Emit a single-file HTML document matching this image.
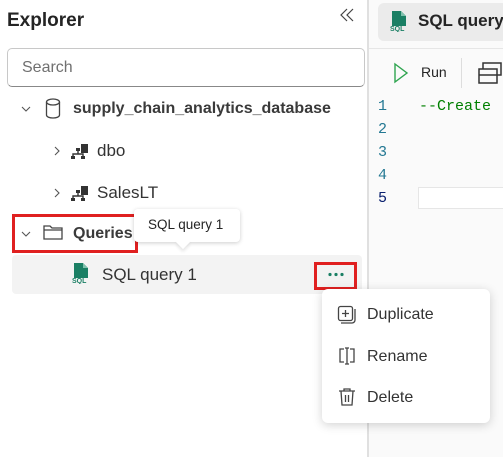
<!DOCTYPE html>
<html><head><style>
*{margin:0;padding:0;box-sizing:border-box}
body{width:503px;height:457px;overflow:hidden;background:#fff;font-family:"Liberation Sans",sans-serif;color:#242424;position:relative}
.a{position:absolute;white-space:nowrap}
</style></head><body>
<div class="a" style="left:367px;top:0;width:2px;height:457px;background:#e0e0e0"></div>
<div class="a" style="left:369px;top:0;width:134px;height:457px;background:#fafafa"></div>
<div class="a" style="left:369px;top:48px;width:134px;height:1px;background:#e6e6e6"></div>
<div class="a" style="left:378px;top:3px;width:130px;height:38px;background:#ebebeb;border-radius:6px"></div>
<svg class="a" style="left:390px;top:10px" width="18" height="22" viewBox="0 0 18 22"><path d="M2 1h9l5 5v10H2z" fill="#1a7f64"/><path d="M11 1v5h5" fill="#7fc1ad"/><text x="0" y="21" font-size="7" font-weight="bold" fill="#1a7f64" font-family="Liberation Sans">SQL</text></svg>
<div class="a" style="left:418px;top:11px;font-size:17px;font-weight:bold;color:#242424">SQL query 1</div>
<svg class="a" style="left:393px;top:62px" width="16" height="22"><path d="M2 2L14 11L2 20Z" fill="none" stroke="#2ea44f" stroke-width="1.4"/></svg>
<div class="a" style="left:421px;top:64px;font-size:14px">Run</div>
<div class="a" style="left:461px;top:58px;width:1px;height:30px;background:#ddd"></div>
<svg class="a" style="left:478px;top:61px" width="25" height="24"><rect x="5" y="2" width="18" height="12" fill="none" stroke="#333" stroke-width="1.5"/><rect x="1" y="8" width="18" height="14" fill="#fafafa" stroke="#333" stroke-width="1.5"/><line x1="1" y1="14" x2="19" y2="14" stroke="#333" stroke-width="1.5"/></svg>
<div class="a" style="left:378px;top:95px;font:15px 'Liberation Mono',monospace;line-height:23px;color:#237893">1<br>2<br>3<br>4<br><span style="color:#0b216f">5</span></div>
<div class="a" style="left:419px;top:95px;font:15px 'Liberation Mono',monospace;line-height:23px;color:#008000">--Create</div>
<div class="a" style="left:418px;top:187px;width:90px;height:22px;border:1px solid #e6e6e6;background:#fff"></div>
<div class="a" style="left:7px;top:10px;font-size:19px;font-weight:bold">Explorer</div>
<svg class="a" style="left:340px;top:8px" width="14" height="14"><path d="M7 1L1 7l6 6M13 1L7 7l6 6" fill="none" stroke="#444" stroke-width="1.2"/></svg>
<div class="a" style="left:7px;top:48px;width:358px;height:39px;border:1px solid #c8c8c8;border-bottom-color:#888;border-radius:5px;background:#fff"></div>
<div class="a" style="left:22px;top:59px;font-size:16px;color:#707070">Search</div>
<svg class="a" style="left:21px;top:106px" width="10" height="6"><path d="M1 1l4 4 4-4" fill="none" stroke="#555" stroke-width="1.1"/></svg>
<svg class="a" style="left:44px;top:98px" width="18" height="22"><ellipse cx="9" cy="4" rx="6.5" ry="3" fill="none" stroke="#444" stroke-width="1.3"/><path d="M2.5 4v13c0 4 13 4 13 0V4" fill="none" stroke="#444" stroke-width="1.3"/></svg>
<div class="a" style="left:73px;top:100px;font-size:16px;font-weight:bold;color:#3a3a3a">supply_chain_analytics_database</div>
<svg class="a" style="left:54px;top:146px" width="6" height="10"><path d="M1 1l4 4-4 4" fill="none" stroke="#555" stroke-width="1.1"/></svg>
<svg class="a" style="left:54px;top:188px" width="6" height="10"><path d="M1 1l4 4-4 4" fill="none" stroke="#555" stroke-width="1.1"/></svg>
<svg class="a" style="left:70px;top:142px" width="20" height="18"><path d="M3 16v-4h10v4M8 12V8" fill="none" stroke="#333" stroke-width="1.4"/><rect x="1" y="14" width="4" height="3" fill="#333"/><rect x="11" y="14" width="4" height="3" fill="#333"/><rect x="6" y="6" width="4" height="3" fill="#333"/><path d="M11 2h7v9h-7z" fill="#333"/></svg>
<svg class="a" style="left:70px;top:184px" width="20" height="18"><path d="M3 16v-4h10v4M8 12V8" fill="none" stroke="#333" stroke-width="1.4"/><rect x="1" y="14" width="4" height="3" fill="#333"/><rect x="11" y="14" width="4" height="3" fill="#333"/><rect x="6" y="6" width="4" height="3" fill="#333"/><path d="M11 2h7v9h-7z" fill="#333"/></svg>
<div class="a" style="left:97px;top:141px;font-size:17px;color:#333">dbo</div>
<div class="a" style="left:97px;top:183px;font-size:17px;color:#333">SalesLT</div>
<div class="a" style="left:12px;top:214px;width:126px;height:39px;border:3px solid #e02020"></div>
<svg class="a" style="left:21px;top:231px" width="10" height="6"><path d="M1 1l4 4 4-4" fill="none" stroke="#555" stroke-width="1.1"/></svg>
<svg class="a" style="left:43px;top:224px" width="20" height="17"><path d="M1 2h6l2 2h10v11H1z" fill="none" stroke="#444" stroke-width="1.3"/><path d="M1 6h18" stroke="#444" stroke-width="1.2"/></svg>
<div class="a" style="left:73px;top:225px;font-size:16px;font-weight:bold;color:#3a3a3a">Queries</div>
<div class="a" style="left:134px;top:209px;width:106px;height:33px;background:#fff;border-radius:4px;box-shadow:0 1px 4px rgba(0,0,0,.2)"></div>
<div class="a" style="left:178px;top:237px;width:10px;height:10px;background:#fff;transform:rotate(45deg);box-shadow:2px 2px 3px rgba(0,0,0,.1)"></div>
<div class="a" style="left:134px;top:209px;width:106px;height:32px;background:#fff;border-radius:4px"></div>
<div class="a" style="left:148px;top:217px;font-size:13.5px;color:#242424">SQL query 1</div>
<div class="a" style="left:12px;top:255px;width:350px;height:39px;background:#f3f3f3;border-radius:4px"></div>
<svg class="a" style="left:72px;top:262px" width="18" height="22" viewBox="0 0 18 22"><path d="M2 1h9l5 5v10H2z" fill="#1a7f64"/><path d="M11 1v5h5" fill="#7fc1ad"/><text x="0" y="21" font-size="7" font-weight="bold" fill="#1a7f64" font-family="Liberation Sans">SQL</text></svg>
<div class="a" style="left:102px;top:265px;font-size:17px;color:#333">SQL query 1</div>
<div class="a" style="left:314px;top:262px;width:43px;height:28px;border:3px solid #e02020"></div>
<svg class="a" style="left:326px;top:272px" width="20" height="5"><circle cx="4" cy="2.5" r="1.6" fill="#1a7f64"/><circle cx="10" cy="2.5" r="1.6" fill="#1a7f64"/><circle cx="16" cy="2.5" r="1.6" fill="#1a7f64"/></svg>
<div class="a" style="left:322px;top:289px;width:168px;height:134px;background:#fff;border-radius:6px;box-shadow:0 2px 10px rgba(0,0,0,.18)"></div>
<svg class="a" style="left:337px;top:305px" width="20" height="20"><rect x="1.5" y="1.5" width="14" height="14" rx="2" fill="none" stroke="#444" stroke-width="1.3"/><path d="M4 18h11a3 3 0 0 0 3-3V4" fill="none" stroke="#444" stroke-width="1.3"/><path d="M8.5 5v7M5 8.5h7" stroke="#444" stroke-width="1.3"/></svg>
<div class="a" style="left:367px;top:306px;font-size:16px;color:#333">Duplicate</div>
<svg class="a" style="left:337px;top:346px" width="20" height="20"><path d="M7 3H3v13h4M13 3h4v13h-4M10 2v16M8 2h4M8 18h4" fill="none" stroke="#444" stroke-width="1.3"/></svg>
<div class="a" style="left:367px;top:348px;font-size:16px;color:#333">Rename</div>
<svg class="a" style="left:337px;top:387px" width="20" height="20"><path d="M2 4h16M7 4V2h6v2M4 4l1 14h10l1-14M8.5 8v7M11.5 8v7" fill="none" stroke="#444" stroke-width="1.3"/></svg>
<div class="a" style="left:367px;top:389px;font-size:16px;color:#333">Delete</div>
</body></html>
